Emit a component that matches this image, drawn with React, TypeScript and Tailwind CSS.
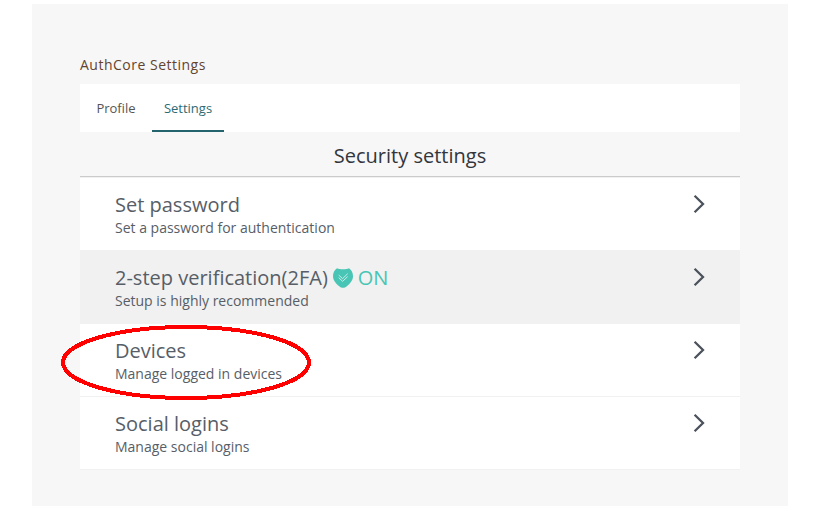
import React from 'react';

type Item = { title: string; description: string; on?: boolean };

const items: Item[] = [
  { title: 'Set password', description: 'Set a password for authentication' },
  { title: '2-step verification(2FA)', description: 'Setup is highly recommended', on: true },
  { title: 'Devices', description: 'Manage logged in devices' },
  { title: 'Social logins', description: 'Manage social logins' },
];

function Shield() {
  return (
    <svg width="20" height="20" viewBox="0 0 20 20" className="ml-[5px] mr-[5px]">
      <path d="M4 0.2C6.5 1.5 13.5 1.5 16 0.2C18.5 1.8 20 4.5 20 8.2C20 12.5 17 15.5 13.8 18.2C11.2 20.4 8.8 20.4 6.2 18.2C3 15.5 0 12.5 0 8.2C0 4.5 1.5 1.8 4 0.2Z" fill="#48c5b5" />
      <path d="M5.7 9.7L9.6 13.3L14.7 8.6M5.7 7.1L9.6 10.6L14.7 5.7" fill="none" stroke="#e4f7f4" strokeWidth="0.8" />
    </svg>
  );
}

function Row({ item }: { item: Item }) {
  return (
    <div className={`flex h-[73px] justify-between border-t border-[#f1f1f1] pl-[35px] pr-[34px] text-[#575e67] ${item.on ? 'bg-[#f1f1f1]' : 'bg-white'}`}>
      <div className="pt-3">
        <div className="flex h-[30px] items-center text-xl leading-[30px]">
          <span>{item.title}</span>
          {item.on && <Shield />}
          {item.on && <span className="text-[#48c5b5]">ON</span>}
        </div>
        <div className="text-sm leading-[15px]">{item.description}</div>
      </div>
      <svg width="14" height="20" viewBox="0 0 14 20" className="mt-4" fill="none" stroke="#4b525c" strokeWidth="2.3">
        <path d="M2.6 1.7L11 10L2.6 18.3" />
      </svg>
    </div>
  );
}

export default function App() {
  return (
    <div className="relative h-[510px] w-[820px] overflow-hidden bg-white px-8 pt-1 font-['Open_Sans',sans-serif]">
      <main className="h-[502px] bg-[#f7f7f7] px-12 pt-[50px]">
        <h1 className="h-[30px] text-sm leading-[22px] tracking-[0.5px] text-[#63442f]">AuthCore Settings</h1>
        <nav className="flex h-12 bg-white text-[13px] leading-[48px]">
          <span className="w-[72px] text-center text-[#555555]">Profile</span>
          <span className="w-[72px] border-b-2 border-[#24646d] text-center text-[#2c6b74]">Settings</span>
        </nav>
        <h2 className="h-[45px] border-b border-[#cbcbcb] text-center text-xl leading-[48px] text-[#32363c]">Security settings</h2>
        <div className="border-b border-[#f1f1f1]">
          {items.map((item) => (
            <Row key={item.title} item={item} />
          ))}
        </div>
      </main>
      <svg className="absolute left-[60px] top-[324px]" width="252" height="77" viewBox="0 0 252 77" fill="none" shapeRendering="crispEdges">
        <ellipse cx="126" cy="38.5" rx="123" ry="35.5" stroke="#ff0000" strokeWidth="4" />
      </svg>
    </div>
  );
}
